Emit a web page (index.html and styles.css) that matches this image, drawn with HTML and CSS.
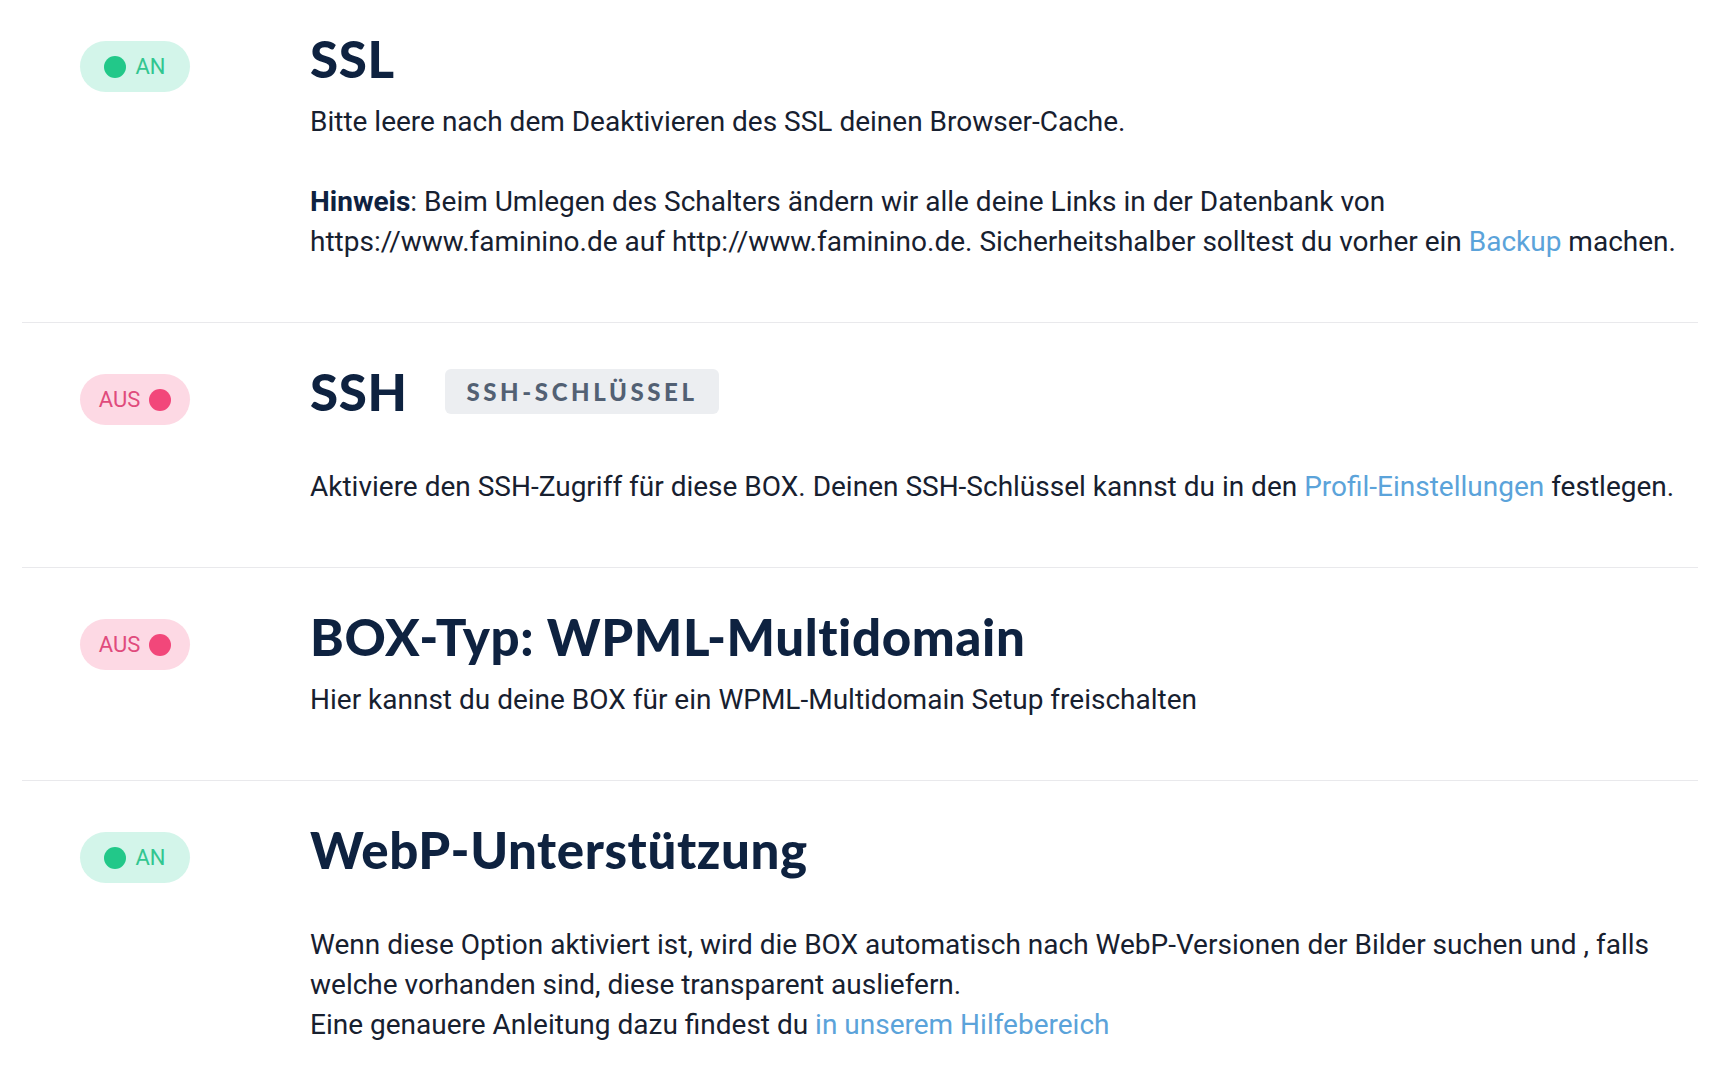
FILE: index.html
```html
<!DOCTYPE html>
<html lang="de">
<head>
<meta charset="utf-8">
<title>BOX Einstellungen</title>
<link rel="stylesheet" href="styles.css">
</head>
<body>
<div class="settings">
  <section class="row row-first">
    <div class="toggle-col"><span class="pill pill-on"><span class="dot"></span><span class="pill-label">AN</span></span></div>
    <div class="content">
      <h2 class="title">SSL</h2>
      <p class="text">Bitte leere nach dem Deaktivieren des SSL deinen Browser-Cache.</p>
      <p class="text text-gap"><strong>Hinweis</strong>: Beim Umlegen des Schalters ändern wir alle deine Links in der Datenbank von<br>https://www.faminino.de auf http://www.faminino.de. Sicherheitshalber solltest du vorher ein <a href="#" class="link">Backup</a> machen.</p>
    </div>
  </section>
  <section class="row">
    <div class="toggle-col"><span class="pill pill-off"><span class="pill-label">AUS</span><span class="dot"></span></span></div>
    <div class="content">
      <div class="title-line">
        <h2 class="title">SSH</h2>
        <span class="badge">SSH-Schlüssel</span>
      </div>
      <p class="text text-far">Aktiviere den SSH-Zugriff für diese BOX. Deinen SSH-Schlüssel kannst du in den <a href="#" class="link">Profil-Einstellungen</a> festlegen.</p>
    </div>
  </section>
  <section class="row">
    <div class="toggle-col"><span class="pill pill-off"><span class="pill-label">AUS</span><span class="dot"></span></span></div>
    <div class="content">
      <h2 class="title">BOX-Typ: WPML-Multidomain</h2>
      <p class="text">Hier kannst du deine BOX für ein WPML-Multidomain Setup freischalten</p>
    </div>
  </section>
  <section class="row">
    <div class="toggle-col"><span class="pill pill-on"><span class="dot"></span><span class="pill-label">AN</span></span></div>
    <div class="content">
      <h2 class="title">WebP-Unterstützung</h2>
      <p class="text text-far">Wenn diese Option aktiviert ist, wird die BOX automatisch nach WebP-Versionen der Bilder suchen und , falls<br>welche vorhanden sind, diese transparent ausliefern.<br>Eine genauere Anleitung dazu findest du <a href="#" class="link">in unserem Hilfebereich</a></p>
    </div>
  </section>
</div>
</body>
</html>
```
FILE: styles.css
```css
html, body {
  margin: 0;
  padding: 0;
  background: #ffffff;
}
body {
  font-family: Roboto, "Liberation Sans", sans-serif;
  color: #17202f;
  overflow: hidden;
}
.settings {
  margin: 0 22px;
}
.row {
  display: grid;
  grid-template-columns: 230px 1fr;
  padding: 44px 0 60px 58px;
  border-bottom: 1px solid #e9e9ec;
}
.row-first {
  padding-top: 34px;
}
.row:last-child {
  border-bottom: none;
}
.toggle-col {
  padding-top: 7px;
}
.pill {
  display: flex;
  align-items: center;
  justify-content: center;
  gap: 9px;
  width: 110px;
  height: 51px;
  border-radius: 26px;
  font-size: 22px;
  box-sizing: border-box;
}
.pill .dot {
  width: 22px;
  height: 22px;
  border-radius: 50%;
}
.pill-on {
  background: #d3f5ea;
  color: #32c690;
}
.pill-on .dot {
  background: #22c889;
}
.pill-off {
  background: #fdd9e4;
  color: #e04b7c;
}
.pill-off .dot {
  background: #f2477a;
}
.content {
  min-width: 0;
}
.title-line {
  display: flex;
  align-items: center;
  gap: 38px;
}
.title {
  margin: 0;
  font-family: Lato, "Open Sans", sans-serif;
  font-weight: 900;
  font-size: 51px;
  line-height: 50px;
  color: #0e2240;
  letter-spacing: 0.6px;
}
.badge {
  display: inline-flex;
  align-items: center;
  height: 45px;
  padding: 0 21px;
  border-radius: 6px;
  background: #eceef1;
  color: #526073;
  font-family: Lato, "Open Sans", sans-serif;
  font-weight: 900;
  font-size: 24px;
  letter-spacing: 3.6px;
  text-transform: uppercase;
  margin-top: -2px;
}
.text {
  margin: 18px 0 0;
  font-size: 28px;
  line-height: 40px;
}
.text-gap {
  margin-top: 40px;
}
.text-far {
  margin-top: 50px;
}
.text strong {
  font-weight: 700;
  color: #0e2240;
}
.link {
  color: #5ba3da;
  text-decoration: none;
}
```
